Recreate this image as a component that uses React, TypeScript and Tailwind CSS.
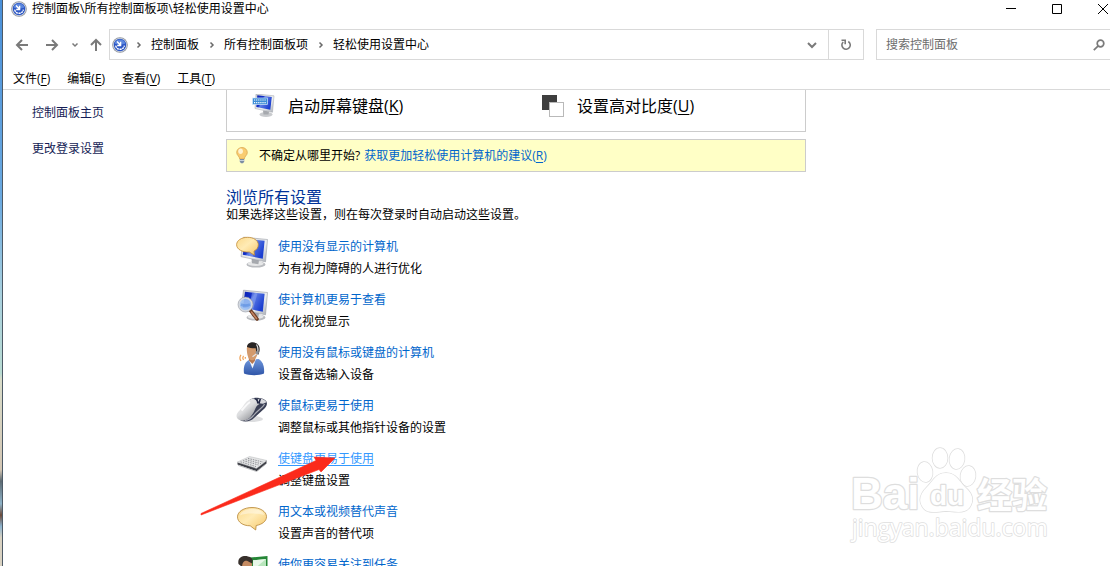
import type { ReactNode } from "react";

function EaseIcon({ size }: { size: number }) {
  return (
    <svg width={size} height={size} viewBox="0 0 16 16" aria-hidden="true" className="shrink-0">
      <circle cx="8" cy="8" r="7.8" fill="#8f949c" />
      <circle cx="8" cy="8" r="7" fill="#d3d8e2" />
      <circle cx="8" cy="8" r="6.2" fill="#2a55c4" />
      <path d="M2.600 6.500a5.600 5.600 0 0 1 10.800 0c-3 1.400-7.800 1.400-10.800 0z" fill="#5b86de" />
      <path d="M3.600 8.600c.8 2.700 2.500 3.700 4.400 3.700s3.600-1 4.400-3.700" fill="none" stroke="#fff" strokeWidth="1.400" strokeDasharray="2.200 .6" />
      <path d="M5 4.500 8.300 8M8.600 4.800v3.700H5.200" fill="none" stroke="#fff" strokeWidth="1.400" />
    </svg>
  );
}

function Defs() {
  return (
    <svg width="0" height="0" className="absolute" aria-hidden="true">
      <defs>
        <linearGradient id="screen" x1="0" y1="0" x2="1" y2="0.5">
          <stop offset="0" stopColor="#0a1fb0" />
          <stop offset="0.4" stopColor="#1230c8" />
          <stop offset="0.5" stopColor="#5f7ee6" />
          <stop offset="1" stopColor="#1c3fd0" />
        </linearGradient>
        <linearGradient id="frame" x1="0" y1="0" x2="1" y2="1">
          <stop offset="0" stopColor="#c9ccd2" />
          <stop offset="0.6" stopColor="#eef0f2" />
          <stop offset="1" stopColor="#a9adb5" />
        </linearGradient>
        <linearGradient id="bubble" x1="0" y1="0" x2="1" y2="1">
          <stop offset="0" stopColor="#fbd98a" />
          <stop offset="0.45" stopColor="#ffebb5" />
          <stop offset="1" stopColor="#f6c768" />
        </linearGradient>
        <linearGradient id="silver" x1="0" y1="0" x2="0.8" y2="1">
          <stop offset="0" stopColor="#f4f4f4" />
          <stop offset="0.5" stopColor="#dcdddf" />
          <stop offset="1" stopColor="#85878c" />
        </linearGradient>
        <linearGradient id="shirt" x1="0" y1="0" x2="0" y2="1">
          <stop offset="0" stopColor="#6f97dc" />
          <stop offset="1" stopColor="#2f55a8" />
        </linearGradient>
      </defs>
    </svg>
  );
}

function Monitor() {
  return (
    <>
      <ellipse cx="20" cy="28.400" rx="9.500" ry="3.200" fill="#b9bbbf" />
      <ellipse cx="19.500" cy="27.600" rx="8" ry="2.300" fill="#e6e7e8" />
      <path d="M15.500 22.500 23 24.200l-.6 4-6.400-.9z" fill="#a6a9ae" />
      <path d="M7.500 1.200 31.500 3.500 29.500 25.800 5 20.600z" fill="url(#frame)" stroke="#9b9ea6" strokeWidth=".6" />
      <path d="M9 2.800 28.600 4.800 26.800 22.700 6.800 18.800z" fill="url(#screen)" />
      <path d="m16 3.600 5.500.6L17 20.600l-4-.8z" fill="#8fa7f2" opacity=".5" />
    </>
  );
}

function MonitorBubbleIcon() {
  return (
    <svg width="32" height="34" viewBox="0 0 32 34" aria-hidden="true">
      <Monitor />
      <path d="M11.500 1.300c6 0 10.800 3.200 10.800 7.400 0 3-1.700 5.200-4.300 6.300l.4 4.200-5-3.200C6.500 16.500.6 13.400.6 8.700.6 4.500 5.500 1.300 11.500 1.300z" fill="url(#bubble)" stroke="#c38b35" strokeWidth=".8" />
    </svg>
  );
}

function MonitorLensIcon() {
  return (
    <svg width="32" height="34" viewBox="0 0 32 34" aria-hidden="true">
      <Monitor />
      <path d="m14.500 21.500 6.500 8.500" stroke="#6b3b22" strokeWidth="3.600" strokeLinecap="round" />
      <path d="m15.500 23 5 6.500" stroke="#c28462" strokeWidth="1.600" strokeLinecap="round" />
      <circle cx="9.500" cy="15.500" r="6.600" fill="#9cc1f3" fillOpacity=".9" stroke="#d5d9df" strokeWidth="1.800" />
      <circle cx="9.500" cy="15.500" r="7.500" fill="none" stroke="#868c98" strokeWidth=".5" />
      <path d="M5 15.500c2.500 1.200 6.500 1.200 9 0" stroke="#4c83dc" strokeWidth="2.500" fill="none" opacity=".5" />
    </svg>
  );
}

function HeadsetIcon() {
  return (
    <svg width="32" height="34" viewBox="0 0 32 34" aria-hidden="true">
      <path d="M8 31.500c-.8-6 .5-11.500 5-13.500l9.500-1c4 2 6.200 7 5.500 14.500-5 2.300-15 2.300-20 0z" fill="url(#shirt)" />
      <path d="m13 18 3.500 8.500L20 17z" fill="#f5f7fb" />
      <path d="M12.500 14.500h7l-.6 4.500-2.600 3-3.300-3.500z" fill="#b77850" />
      <path d="M10.800 6c0-4 10.600-4.500 11 1.500.3 5-1.800 10.700-5.600 10.700-4 0-5.400-5.600-5.400-12.200z" fill="#d39a6d" />
      <path d="M11 5C11-.5 20.500-1.500 23 4c1.200 2.800.6 6-.7 8.800l-1.800-1.300-.8-5.200c-3.200.2-6.400-.4-8.700-1.300z" fill="#292524" />
      <path d="M20.500 2.500c1.600 2.500 1.800 5.500 1 8.500l-5 3.800" fill="none" stroke="#e2e4e8" strokeWidth="1.200" />
      <circle cx="21.200" cy="10.600" r="1.600" fill="#8d9299" />
      <path d="M6.500 13.800q-1.500 2 0 4.200M4 12.800q-2.200 3 0 6.200M8.300 15.100v1.700" fill="none" stroke="#f0a054" strokeWidth="1.200" transform="translate(1 0)" />
    </svg>
  );
}

function MouseIcon() {
  return (
    <svg width="32" height="34" viewBox="0 0 32 34" aria-hidden="true">
      <ellipse cx="16" cy="24" rx="11" ry="3" fill="#dcdddf" />
      <path d="M14 4.500c5-2.500 11-2.200 15 .5 2.800 2 2.500 5.500-.5 8.500L18 23c-3 3.500-9 4.500-13.500 2.500z" fill="#3a3f55" />
      <path d="M14 4.400c2-.8 4.500-1 6.500-.6l2.700 5.400C19 11 19.500 16 15.500 20.500c-3 4.300-8 6.500-12.500 4.300-4-2.500-2.800-6.300 1-9.800 3.500-3 4.500-8.500 10-10.600z" fill="url(#silver)" />
      <path d="M23.500 3.500c3 .2 6 1.600 7 3.700l-3.500 1.600-3.800-.5-1.700-3.500z" fill="#d9dade" />
      <path d="M18.500 3.500c2 .5 3.300 3 3.300 5M24.300 3.800 23 8.500" fill="none" stroke="#1f2542" strokeWidth="1.500" />
      <path d="M28.500 9c-1 3-7.500 7-11 11.500-2.500 3-5.500 4.500-8.500 5" fill="none" stroke="#a9abb4" strokeWidth="1.200" />
      <path d="M5.500 15.500c3-3 5-6.500 8.500-8.500" fill="none" stroke="#fff" strokeWidth="2" opacity=".8" />
    </svg>
  );
}

function KeyboardIcon() {
  return (
    <svg width="32" height="34" viewBox="0 0 32 34" aria-hidden="true">
      <path d="M1.500 14.500v2l19.500 6.800 9.500-7.800v-3z" fill="#3b3d44" />
      <path d="M1 14.200 13.500 8.500 31 12.500 20.500 20.500z" fill="#e4e5e6" stroke="#a7a8ab" strokeWidth=".4" />
      <g fill="none" stroke="#7c7e83" strokeWidth=".8" strokeDasharray="1.500 1">
        <path d="m4.500 13.800 15.500 4.800M7 12.600l15.500 4.400M9.500 11.500l15.500 4.200M12 10.400l15.200 3.700" />
      </g>
      <path d="m2 17.300 18.500 6.200L30 16" fill="none" stroke="#b6b7ba" strokeWidth=".8" />
    </svg>
  );
}

function BubbleIcon() {
  return (
    <svg width="32" height="34" viewBox="0 0 32 34" aria-hidden="true">
      <path d="M16 6.500c8 0 14.500 4 14.500 9.200 0 4.400-4.300 7.800-10.300 8.800l-.5 4.500-5.500-4.200c-7.400 0-12.700-3.900-12.700-8.900C1.500 10.500 8 6.500 16 6.500z" fill="url(#bubble)" stroke="#b58435" strokeWidth=".8" />
      <path d="M4 14.500c.7-4 6-6.500 12-6.500s11.300 2.500 12.200 6c-5.200-1.500-18.200-2.500-24.200.5z" fill="#fff" opacity=".4" />
    </svg>
  );
}

function TaskIcon() {
  return (
    <svg width="32" height="34" viewBox="0 0 32 34" aria-hidden="true">
      <path d="M14 3.500 31.500 2v21L14 25z" fill="#258636" />
      <path d="M17 6.300 30 5v15.500L17 22z" fill="#b9e6bd" />
      <path d="m17 6.300 13-1.300-13 11z" fill="#e7f7e8" />
      <path d="M5 7c1-4 10-4 11 1 .6 4-.8 9-4.800 10C7 18 4.500 12 5 7z" fill="#c58b62" />
      <path d="M2.500 10C1 3 8 1 12 2.500c4 .5 5.500 3.500 4 7l-5-2.700C8 6.500 6.500 8 6 13z" fill="#38302c" />
      <path d="M1 32c0-8 3-13 8-14s11 4 11 14z" fill="url(#shirt)" />
    </svg>
  );
}

function OnScreenKeyboardIcon() {
  return (
    <svg width="24" height="24" viewBox="0 0 24 24" aria-hidden="true">
      <ellipse cx="14" cy="20.500" rx="6.500" ry="2.400" fill="#c9cbce" />
      <path d="m11 16.500 6 1-.5 3h-5z" fill="#a6a9ae" />
      <path d="M4 0 22 1.800 20.500 18.300 3 14.500z" fill="url(#frame)" stroke="#a1a4aa" strokeWidth=".5" />
      <path d="M5.300 1.300 19.800 2.900 18.300 15.800 4.300 13z" fill="url(#screen)" />
      <rect x="0.500" y="4" width="15" height="6.500" fill="#3c8cd6" stroke="#d4e9fa" strokeWidth=".7" />
      <path d="M2 6h12M2 8.600h12" stroke="#fff" strokeWidth="1.100" strokeDasharray="1.200 .9" />
    </svg>
  );
}

function ContrastIcon() {
  return (
    <svg width="22" height="22" viewBox="0 0 22 22" aria-hidden="true">
      <rect x="0" y="0" width="15" height="15" fill="#3e3e3e" />
      <rect x="7.500" y="7.500" width="14" height="14" fill="#fff" stroke="#b9b9b9" />
    </svg>
  );
}

function BulbIcon() {
  return (
    <svg width="12" height="17" viewBox="0 0 12 17" aria-hidden="true">
      <path d="M6 .5c3 0 5.300 2.200 5.300 5C11.300 8.500 8.500 9 8.300 12H3.700C3.500 9 .7 8.500.7 5.500.7 2.700 3 .5 6 .5z" fill="#f9cc70" stroke="#d59f48" strokeWidth=".7" />
      <ellipse cx="4.600" cy="4.300" rx="2.300" ry="2.700" fill="#fff4d2" />
      <path d="M3.800 12h4.400v2.800L7 16.300H5l-1.200-1.500z" fill="#7d8ea3" />
      <path d="M3.800 13.500h4.400" stroke="#dbe3ec" strokeWidth=".8" />
    </svg>
  );
}

function Stroke({ d, w, h, className, width = 1.5 }: { d: string; w: number; h: number; className?: string; width?: number }) {
  return (
    <svg width={w} height={h} viewBox={`0 0 ${w} ${h}`} fill="none" stroke="currentColor" strokeWidth={width} className={className} aria-hidden="true">
      <path d={d} />
    </svg>
  );
}

const settings: { title: string; text: string; icon: ReactNode; active?: boolean }[] = [
  { title: "使用没有显示的计算机", text: "为有视力障碍的人进行优化", icon: <MonitorBubbleIcon /> },
  { title: "使计算机更易于查看", text: "优化视觉显示", icon: <MonitorLensIcon /> },
  { title: "使用没有鼠标或键盘的计算机", text: "设置备选输入设备", icon: <HeadsetIcon /> },
  { title: "使鼠标更易于使用", text: "调整鼠标或其他指针设备的设置", icon: <MouseIcon /> },
  { title: "使键盘更易于使用", text: "调整键盘设置", icon: <KeyboardIcon />, active: true },
  { title: "用文本或视频替代声音", text: "设置声音的替代项", icon: <BubbleIcon /> },
  { title: "使你更容易关注到任务", text: "", icon: <TaskIcon /> },
];

const menus = [
  ["文件", "F"],
  ["编辑", "E"],
  ["查看", "V"],
  ["工具", "T"],
];

const crumbs = ["控制面板", "所有控制面板项", "轻松使用设置中心"];

function Key({ k }: { k: string }) {
  return (
    <>
      (<span className="underline underline-offset-2">{k}</span>)
    </>
  );
}

function Watermark() {
  return (
    <svg width="204" height="104" viewBox="0 0 204 104" className="pointer-events-none absolute right-[58px] bottom-[18px]">
      <g fill="#fff" stroke="#dedede" strokeWidth="2.500" paintOrder="stroke" strokeLinejoin="round">
        <text x="3" y="65" fontSize="44" fontWeight="700" fontFamily="Liberation Sans, sans-serif">Bai</text>
        <g strokeWidth="1.500">
          <ellipse cx="77" cy="28" rx="7.500" ry="10" transform="rotate(-8 77 28)" />
          <ellipse cx="92" cy="14" rx="7.500" ry="10" />
          <ellipse cx="109" cy="15" rx="7.500" ry="10" transform="rotate(8 109 15)" />
          <ellipse cx="120" cy="32" rx="7.500" ry="10" transform="rotate(8 120 32)" />
          <path d="M98 29c10 0 13 8 19 14 7 6 9 12 6 18-4 9-13 7-25 6-12 1-20 3-24-5-4-7-1-13 5-19 6-6 9-14 19-14z" />
        </g>
        <text x="82" y="61" fontSize="28" fontWeight="700" fontFamily="Liberation Sans, sans-serif">du</text>
        <text x="129" y="64" fontSize="35" fontWeight="700" fontFamily="Noto Sans CJK SC, sans-serif">经验</text>
        <text x="4" y="92" fontSize="23" fontWeight="500" strokeWidth="1.500" fontFamily="Open Sans, sans-serif">jingyan.baidu.com</text>
      </g>
    </svg>
  );
}

export default function App() {
  return (
    <div className="relative flex h-screen overflow-hidden bg-white font-['Open_Sans','Noto_Sans_CJK_SC',sans-serif] text-[12px] leading-4 text-black">
      <Defs />
      <div className="w-[3px] shrink-0 border-r border-[#4d5a66] bg-[linear-gradient(to_bottom,#4a90d9_0%,#6aa9e0_35%,#a8d0de_52%,#b9dbd2_66%,#d9dcc9_67%,#d3c6b4_83%,#5d6a72_85%,#8fb3c8_89%,#6b4a3a_91%,#8db4cf_93%,#d9d2c2_95%)]" />

      <div className="flex min-w-0 grow flex-col">
        <header className="flex h-[18px] shrink-0 items-center pl-2">
          <EaseIcon size={16} />
          <h1 className="ml-[5px] grow">控制面板\所有控制面板项\轻松使用设置中心</h1>
          <div className="-mr-4 flex">
            <button aria-label="最小化" className="flex w-[46px] justify-center">
              <Stroke w={10} h={10} d="M0 4.500h10" width={1} />
            </button>
            <button aria-label="最大化" className="flex w-[46px] justify-center">
              <Stroke w={10} h={10} d="M.5.5h9v9h-9z" width={1} />
            </button>
            <button aria-label="关闭" className="flex w-[46px] justify-center">
              <Stroke w={10} h={10} d="m0 0 10 10M10 0 0 10" width={1} />
            </button>
          </div>
        </header>

        <nav className="flex shrink-0 items-center pt-[11px] pl-3 text-[#7a7a7a]">
          <button aria-label="后退"><Stroke w={14} h={12} d="M13 6H2M7 1 2 6l5 5" width={2} /></button>
          <button aria-label="前进" className="ml-4"><Stroke w={14} h={12} d="M1 6h11M7 1l5 5-5 5" width={2} /></button>
          <button aria-label="最近位置" className="ml-3"><Stroke w={8} h={6} d="m1.500 1.500 2.500 2.500 2.500-2.500" /></button>
          <button aria-label="上移" className="ml-[11px]"><Stroke w={12} h={14} d="M6 13V2M1 7l5-5 5 5" width={2} /></button>
          <div className="ml-[7px] flex h-[31px] grow items-center border border-[#d9d9d9] pl-[2px]">
            <EaseIcon size={16} />
            <div className="-ml-0.5 flex">
              {crumbs.map((c) => (
                <span key={c} className="flex items-center">
                  <span className="flex w-[25px] justify-center">
                    <Stroke w={6} h={8} d="m1.500 1.500 2.500 2.500-2.500 2.500" className="text-[#6a6a6a]" />
                  </span>
                  <a href="#" className="whitespace-nowrap text-black">{c}</a>
                </span>
              ))}
            </div>
            <button aria-label="展开" className="ml-auto flex w-[33px] justify-center">
              <Stroke w={10} h={8} d="m1 2 4 4 4-4" width={2} />
            </button>
            <button aria-label="刷新" className="flex h-full w-[35px] items-center justify-center border-l border-[#d9d9d9]">
              <svg width="12" height="12" viewBox="0 0 12 12" fill="none" stroke="currentColor" strokeWidth="1.600" aria-hidden="true">
                <path d="M8.300 2.500A4.200 4.200 0 1 1 3.200 3M1.500 1.300h3.700v4" />
              </svg>
            </button>
          </div>
          <label className="ml-3 flex h-[31px] w-[234px] items-center border border-r-0 border-[#d9d9d9] pr-[5px] pl-[9px]">
            <input aria-label="搜索控制面板" placeholder="搜索控制面板" className="min-w-0 grow bg-transparent outline-none placeholder:text-[#6d6d6d]" />
            <svg width="12" height="12" viewBox="0 0 12 12" fill="none" stroke="currentColor" strokeWidth="1.700" aria-hidden="true">
              <circle cx="7.500" cy="4.500" r="3.300" />
              <path d="M5.200 6.800.8 11.200" />
            </svg>
          </label>
        </nav>

        <div className="flex h-[30px] shrink-0 gap-[17px] border-b border-[#d9d9d9] pt-[11px] pl-[10px]">
          {menus.map(([name, key]) => (
            <button key={key} className="flex h-4 items-center whitespace-nowrap">
              {name}
              <span><Key k={key} /></span>
            </button>
          ))}
        </div>

        <div className="flex min-h-0 grow overflow-hidden">
          <aside className="flex w-[223px] shrink-0 flex-col items-start gap-5 pt-[15px] pl-[29px] text-[#151c55]">
            <a href="#">控制面板主页</a>
            <a href="#">更改登录设置</a>
          </aside>

          <main className="w-full max-w-[580px]">
            <div className="grid h-[42px] grid-cols-2 border border-t-0 border-[#cccccc] pb-[9px] text-[16px] leading-5">
              <button className="flex items-center gap-3 pl-[25px]">
                <OnScreenKeyboardIcon />
                <span>启动屏幕键盘<Key k="K" /></span>
              </button>
              <button className="flex items-center gap-[13px] pl-[26px]">
                <ContrastIcon />
                <span>设置高对比度<Key k="U" /></span>
              </button>
            </div>

            <p className="mt-[7px] flex h-[33px] items-center border border-[#cccccc] bg-[#ffffc6] pl-[9px]">
              <BulbIcon />
              <span className="ml-[11px]">不确定从哪里开始?</span>
              <a href="#" className="ml-1 text-[#0066cc]">获取更加轻松使用计算机的建议<Key k="R" /></a>
            </p>

            <h2 className="mt-[15px] text-[16px] leading-5 text-[#003399]">浏览所有设置</h2>
            <p>如果选择这些设置，则在每次登录时自动启动这些设置。</p>

            <ul className="mt-[13px] flex flex-col gap-[9px] pl-[10px]">
              {settings.map((s) => (
                <li key={s.title} className="flex h-11 gap-[10px] leading-[22px]">
                  <div className="w-8 shrink-0">{s.icon}</div>
                  <div>
                    <a href="#" className={s.active ? "block text-[#3399ff] underline underline-offset-2" : "block text-[#0066cc]"}>{s.title}</a>
                    <p>{s.text}</p>
                  </div>
                </li>
              ))}
            </ul>
          </main>
        </div>
      </div>

      <svg width="136" height="62" viewBox="0 0 136 62" className="pointer-events-none absolute top-[455px] left-[200px]" aria-hidden="true">
        <path d="M1 60v-1.500L116 5.500 114 2l21 1-14 14-2-2.500z" fill="#fb2a1b" stroke="#fb2a1b" strokeWidth=".6" strokeLinejoin="round" />
      </svg>
      <Watermark />
    </div>
  );
}
